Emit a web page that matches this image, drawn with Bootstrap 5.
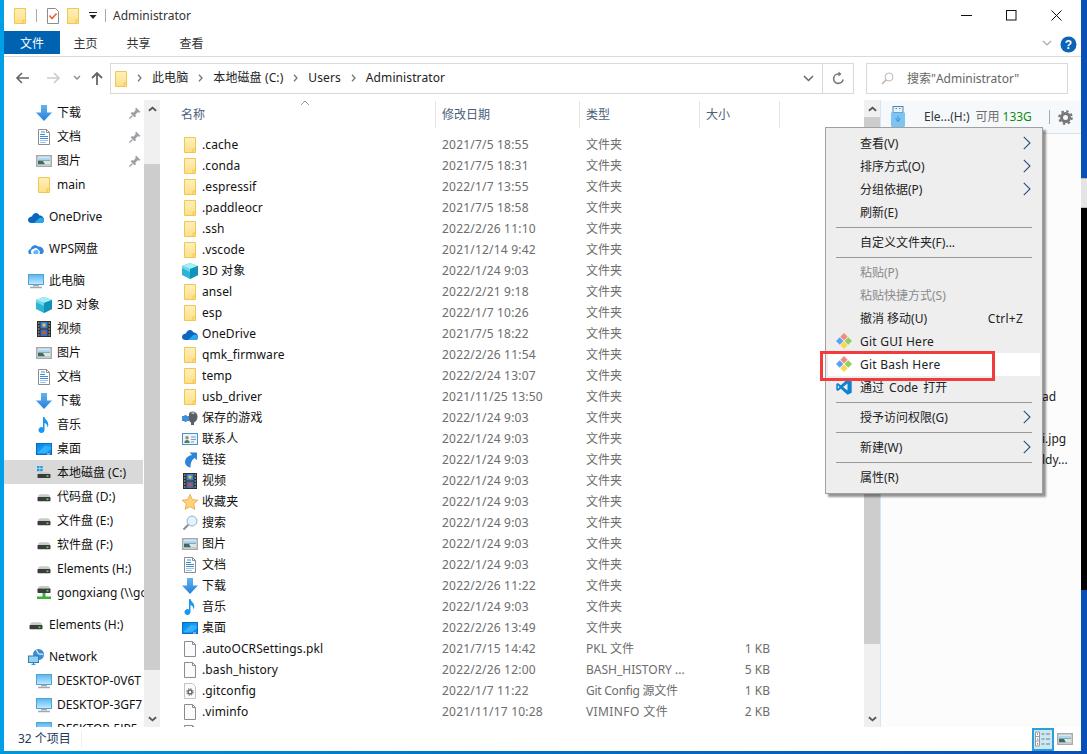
<!DOCTYPE html>
<html lang="zh-CN">
<head>
<meta charset="utf-8">
<title>Administrator</title>
<link href="https://cdn.jsdelivr.net/npm/bootstrap@5.3.0/dist/css/bootstrap.min.css" rel="stylesheet">
<style>
html,body{margin:0;background:#fff}
.screen{width:1087px;height:754px;overflow:hidden;font:12px/16px "Noto Sans","Noto Sans CJK SC",sans-serif;color:#111}
.edge-l{width:4px;background:#00a0e6}
.edge-b{height:3px;background:linear-gradient(90deg,#0098da,#0072c6 45%,#0a4fb4)}
.edge-r{width:6px}
.er1{height:178px;background:#0a4fb4}.er2{height:30px;background:#e4e4e4;border-top:1px solid #bbb;border-bottom:1px solid #bbb}.er3{height:382px;background:#000}.er4{flex:1;background:#0a4fb4}
.win{width:1077px;background:#fff}
.titlebar{height:31px}
.tico{width:16px;height:16px;flex:none}
.qa1{margin-left:8px}
.qsep{width:1px;height:13px;background:#a8a8a8}
.wtitle{font-size:12px;color:#333;margin-left:7px}
.wbox{margin-right:2px}
.wbtn{width:45px;height:31px}
.tabs{height:26px;border-bottom:1px solid #dadada}
.tab{width:53px;height:23px;line-height:25px;text-align:center;color:#333}
.tab-file{width:56px;margin-right:-1px;background:#0063b1;color:#fff}
.hchev{margin-top:9px}
.hcirc{margin-top:5px}
.addr{height:43px;padding-top:6px}
.navbtn{width:18px;height:16px;flex:none;margin-top:7px}
.nb1{margin-left:9px}.nb2{margin-left:14px}.nb3{margin-left:10px;margin-top:12px;flex:none}.nb4{margin-left:7px}
.addrbox{width:744px;height:31px;margin-left:4px;border:1px solid #d9d9d9}
.adfold{margin-left:2px}
.crumb{color:#222;margin-top:-2px}
.cr{margin:0 10px;letter-spacing:.1px}
.addrbtn{width:31px;height:29px;border-left:1px solid #d9d9d9}
.srch{width:202px;height:31px;margin-left:12px;border:1px solid #d9d9d9;color:#666}
.srchic{margin-left:14px}
.srtx{margin-left:13px}
.mainarea{height:627px}
.side{width:140px}
.sbar{width:16px;background:#f0f0f0;flex:none}
.sthumb{background:#cdcdcd}
.sarrow{height:17px}
.st1{height:47px}.st2{height:506px}.st3{height:527px}
.nrow{height:24px;padding-top:2px;white-space:nowrap;overflow:hidden;color:#111}
.l1{padding-left:24px}.l2{padding-left:32px}
.nrow .nico{width:16px;height:16px;flex:none;margin-right:5px}
.sel{background:#d9d9d9;margin-right:1px}
.ngap{margin-top:8px}
.pin{width:12px;height:12px;flex:none;margin-left:auto;margin-right:3px}
.flist{width:704px;flex:none}
.fhead{height:29px;color:#4c607a;position:relative}
.hc{height:27px;margin-top:1px;border-right:1px solid #e5e5e5;padding-left:6px;line-height:27px}
.hc1{width:276px;padding-left:21px}.hc2{width:144px}.hc3{width:120px}.hc4{width:80px}
.sortcaret{position:absolute;left:140px;top:0;width:10px;height:6px}
.frows{margin-top:5px}
.frow{height:21px;line-height:21px;color:#6d6d6d;white-space:nowrap}
.fn{width:276px;padding-left:22px;color:#111;letter-spacing:.1px}
.fn svg{width:16px;height:16px;flex:none;margin-right:4px}
.fd{width:144px;padding-left:6px;letter-spacing:.2px}
.ft{width:120px;padding-left:6px;overflow:hidden}
.ft-narrow{letter-spacing:-.25px}
.ft-wide{letter-spacing:.4px}
.fs{width:70px;text-align:right}
.prev{border-left:1px solid #d6e5f5;background:#fcfcfc}
.phead{height:33px;margin-top:1px;background:#f6f9fc;border-bottom:1px solid #dfdfdf}
.usbi{margin-left:9px}
.pname{color:#333}.pfree{color:#6d6d6d}.pgb{color:#128a12}
.pn1{margin-left:18px}.pf1{margin-left:6px}.pg1{margin-left:3px}
.psep{width:1px;height:14px;background:#aaa;margin-left:17px}
.pgear{margin-left:8px}
.pspace{height:252px}
.ptsp{height:21px}
.ptxt{padding-left:161px;color:#222;white-space:nowrap;height:21px;line-height:21px}
.status{height:24px;color:#1e395b}
.stt{margin-left:14px;margin-right:10px}
.stsep{width:1px;height:16px;background:#efefef}
.vbtn{width:22px;height:23px;background:#cce8f6;border:2px solid #2ba0d8}
.vic{margin:0 8px 0 3px}
.ctx{position:absolute;left:821px;top:127px;width:218px;padding:4px 2px;background:#eee;border:1px solid #a0a0a0;box-shadow:3px 3px 2px rgba(0,0,0,.42);color:#222}
.mi{height:23px;line-height:23px;padding-left:32px;position:relative;white-space:nowrap}
.mi.off{color:#8a8a8a}
.lat{letter-spacing:.25px}
.wsp{word-spacing:2px}
.mi .mic{position:absolute;left:8px;top:3px;width:16px;height:16px}
.mi .arr{position:absolute;right:9px;top:4px;width:8px;height:14px}
.mi .sc{position:absolute;right:17px;top:0;letter-spacing:.25px}
.mi.hov{background:#fff}
.msep{height:1px;background:#999;margin:3px 8px}
.redbox{position:absolute;left:-6px;top:223px;width:175px;height:30px;border:3px solid #f33b3b}
.defs{width:0;height:0}
</style>
</head>
<body>
<svg class="defs d-block" xmlns="http://www.w3.org/2000/svg">
<defs>
<linearGradient id="gf" x1="0" y1="0" x2="0" y2="1"><stop offset="0" stop-color="#feefbd"/><stop offset="1" stop-color="#fddf85"/></linearGradient>
<linearGradient id="gb" x1="0" y1="0" x2="0" y2="1"><stop offset="0" stop-color="#62b4f2"/><stop offset="1" stop-color="#2580d6"/></linearGradient>
<linearGradient id="gs" x1="0" y1="0" x2="0" y2="1"><stop offset="0" stop-color="#56b6f0"/><stop offset="1" stop-color="#c4eaff"/></linearGradient>
<linearGradient id="gd" x1="0" y1="0" x2="1" y2="1"><stop offset="0" stop-color="#0a7fe0"/><stop offset=".5" stop-color="#12a0f8"/><stop offset="1" stop-color="#0a86e6"/></linearGradient>
</defs>
<symbol id="fo" viewBox="0 0 16 16"><path d="M2.500.5h11v15h-11z" fill="url(#gf)" stroke="#f0c850"/><path d="M11 15v-3h2.500" fill="none" stroke="#f0c850"/></symbol>
<symbol id="cu" viewBox="0 0 16 16"><path d="M8 0 16 3v9l-8 4-8-4V3z" fill="#2fb4d6"/><path d="M8 0 16 3 8 6 0 3z" fill="#a4eef4"/><path d="M8 6 16 3v9l-8 4z" fill="#0f93bb"/><path d="M0 3 8 6v3L0 5z" fill="#6fd9e8"/></symbol>
<symbol id="od" viewBox="0 0 16 16"><g transform="translate(0,-1) scale(1,1.200)"><path d="M4 7c1-3.500 6-4 7.500-.8C14 6 16 8 16 10c0 1.500-1 2.500-2.500 2.500h-10C1.500 12.500 0 11.500 0 10 0 8 2 7 4 7z" fill="#0a66c0"/><path d="M6 12.500 11 8.500c2-1.300 5-.5 5 1.700 0 1.400-1 2.300-2.500 2.300z" fill="#2aa6ec"/></g></symbol>
<symbol id="wp" viewBox="0 0 16 16"><path d="M1 13c-1.500-2-.5-4.500 1.500-5C3.500 4 8 3 10 5.500 12 5 15 6.500 15.500 9c.7 2-.3 4-2 4h-2c1-2 0-4-1.500-4.500C9 6.800 7 6.500 5.500 8 4 8 3 9 3 11c0 1 .5 2 1 2z" fill="#2f86e8"/><path d="M6 13c-1.500-1.500-.5-3.500 1-3.500 1.500-1.500 3.500-.5 3.500 1.500 0 1-.3 1.500-.7 2z" fill="#67b4f5"/></symbol>
<symbol id="pc" viewBox="0 0 16 16"><rect x=".5" y="1.500" width="15" height="10" fill="url(#gs)" stroke="#4aa6da"/><path d="M5 12.500h6M2 14.500h12" stroke="#a0a8b0" stroke-width="1.400"/></symbol>
<symbol id="dl" viewBox="0 0 16 16"><path d="M5 0h6v7.500h5L8 16 0 7.500h5z" fill="url(#gb)"/></symbol>
<symbol id="dc" viewBox="0 0 16 16"><path d="M2.500.5h8l3 3v12h-11z" fill="#fff" stroke="#8c8c8c"/><path d="M10.500.5v3h3" fill="none" stroke="#8c8c8c"/><path d="M5 3h4M4 5.500h5M4 7.500h8M4 9.500h8" stroke="#3a8ed8"/><path d="M4 11.500h8M4 13.500h6" stroke="#9cc4e8"/></symbol>
<symbol id="pi" viewBox="0 0 16 16"><rect x=".8" y="2.800" width="14.400" height="10.400" fill="#fff" stroke="#a5a5a5" stroke-width="1.500"/><rect x="2" y="4.500" width="12" height="3" fill="#a6d8f4"/><path d="M2 7.500h12v4H2z" fill="#3f6b62"/><path d="M7 8h7v3.500H9z" fill="#d9e6e4"/></symbol>
<symbol id="vi" viewBox="0 0 16 16"><rect x="1" y="0" width="14" height="16" fill="#2e2e2e"/><path d="M2 1.500h1.500v1H2zM2 4.500h1.500v1H2zM2 7.500h1.500v1H2zM2 10.500h1.500v1H2zM2 13.500h1.500v1H2zM12.500 1.500H14v1h-1.500zM12.500 4.500H14v1h-1.500zM12.500 7.500H14v1h-1.500zM12.500 10.500H14v1h-1.500zM12.500 13.500H14v1h-1.500z" fill="#c8c8c8"/><rect x="4.500" y="1" width="7" height="6.500" fill="#3d7fd0"/><rect x="4.500" y="8.500" width="7" height="6.500" fill="#3d6fb8"/><circle cx="8" cy="4" r="1.700" fill="#e8c840"/><circle cx="8" cy="11.500" r="1.800" fill="#d0552c"/></symbol>
<symbol id="mu" viewBox="0 0 16 16"><path d="M7 0h1.500c.4 2.500 3.800 3.800 3.800 7.500 0 1.200-.3 2.200-.9 3 .2-2.500-1.300-4-2.900-4.500v7a3 3 0 1 1-1.500-2.600z" fill="#1c97ee"/></symbol>
<symbol id="de" viewBox="0 0 16 16"><rect x="0" y="2" width="16" height="12" fill="#0a6cc4"/><rect x="1" y="3" width="14" height="9.500" fill="url(#gd)"/><path d="M1 12.500 9 5l6 1v2l-5 4.500z" fill="#4cc0ff" opacity=".6"/><path d="M11 13h3" stroke="#cfe9fb"/></symbol>
<symbol id="dr" viewBox="0 0 16 16"><path d="M2 8c0-1.500 1-2.800 2.500-2.800h7C13 5.200 14 6.500 14 8z" fill="#c9c9c9"/><rect x="1.500" y="8" width="13" height="4.200" rx=".8" fill="#3b3b3b"/><rect x="10.500" y="9.500" width="2" height="1.500" fill="#52e052"/></symbol>
<symbol id="cd" viewBox="0 0 16 16"><path d="M1 1h2.500v2.300H1zM4.200 1h2.500v2.300H4.200zM1 4h2.500v2.300H1zM4.200 4h2.500v2.300H4.200z" fill="#17a2e6"/><path d="M2 9c0-1 1-1.800 2.500-1.800h7C13 7.200 14 8 14 9z" fill="#c9c9c9"/><rect x="1.500" y="9" width="13" height="4" rx=".8" fill="#3b3b3b"/><rect x="10.500" y="10.300" width="2" height="1.500" fill="#52e052"/></symbol>
<symbol id="nd" viewBox="0 0 16 16"><path d="M2 3.500C2 2.200 3 1 4.500 1h7C13 1 14 2.200 14 3.500z" fill="#c9c9c9"/><rect x="1.500" y="3.500" width="13" height="4.500" rx=".8" fill="#3b3b3b"/><rect x="10.500" y="5" width="2" height="1.500" fill="#52e052"/><path d="M6.500 8h3v3.500h5.500V14H1v-2.500h5.500z" fill="#3fae3f"/></symbol>
<symbol id="ne" viewBox="0 0 16 16"><circle cx="10.500" cy="5.500" r="5.500" fill="#3d8cd0"/><path d="M8 1c2 1 1 3 3 4s3-1 4 1" fill="none" stroke="#d5e9f8" stroke-width="1.300"/><rect x=".5" y="7" width="10" height="6.500" fill="#8fd2f6" stroke="#2f7fb8"/><path d="M3.500 15.300h4M5.500 13.500v2" stroke="#2f7fb8"/></symbol>
<symbol id="gm" viewBox="0 0 16 16"><path d="M7 3.500C9 0 15 1 15.500 6c.3 3-1.200 5.500-3.500 6.500V15H9v-2.500C7.500 12 6.500 10 7 8z" fill="#5a5f66"/><path d="M9 3c1.500-1 3-1 4 0-1 1-3 1.500-4 0z" fill="#c2c6cb"/><path d="M0 6h2.500V5h2v1H7v5H4.500v1h-2v-1H0z" fill="#3e8ed8"/></symbol>
<symbol id="co" viewBox="0 0 16 16"><rect x=".5" y="2.500" width="15" height="11" fill="#eaf4fb" stroke="#4a92c8"/><circle cx="5" cy="6.800" r="1.800" fill="#b08a68"/><path d="M2.300 12c0-2 1-3 2.700-3s2.700 1 2.700 3z" fill="#4f7f63"/><path d="M9 6h5M9 8.500h5M9 11h3" stroke="#7a9cb8"/></symbol>
<symbol id="li" viewBox="0 0 16 16"><path d="M15 .5V8l-2.400-2C9.500 8 8.300 11.500 8.500 15.500 4.300 15 2 11.500 3.500 7.500 4.700 5 7 3.500 10 3L7.500.5z" fill="#2b86d8"/></symbol>
<symbol id="st" viewBox="0 0 16 16"><path d="M8 .5 10.300 5.600l5.500.6-4.100 3.700 1.200 5.500L8 12.600l-4.900 2.800 1.200-5.500L.2 6.200l5.500-.6z" fill="#fcd27a" stroke="#e8a43a" stroke-width=".8"/></symbol>
<symbol id="se" viewBox="0 0 16 16"><circle cx="10" cy="6" r="5" fill="#e4f2fc" stroke="#94b4cc"/><path d="M6.300 9.700 1.500 14.500" stroke="#8a8f96" stroke-width="2"/></symbol>
<symbol id="fi" viewBox="0 0 16 16"><path d="M2.500.5h8l3 3v12h-11z" fill="#fbfbfb" stroke="#8c8c8c"/><path d="M10.500.5v3h3" fill="none" stroke="#8c8c8c"/></symbol>
<symbol id="gc" viewBox="0 0 16 16"><path d="M2.500.5h8l3 3v12h-11z" fill="#fbfbfb" stroke="#c4c4c4"/><circle cx="8" cy="9" r="2" fill="none" stroke="#666" stroke-width="1.500"/><circle cx="8" cy="9" r="3.300" fill="none" stroke="#666" stroke-width="1" stroke-dasharray="1.300 1.300"/></symbol>
<symbol id="gi" viewBox="0 0 16 16"><path d="M8 0 11.700 3.700 8 7.400 4.300 3.700z" fill="#f08c80"/><path d="M12.300 4.300 16 8 12.300 11.700 8.600 8z" fill="#8ed25c"/><path d="M8 8.600 11.700 12.300 8 16 4.300 12.300z" fill="#f8d94c"/><path d="M3.700 4.300 7.400 8 3.700 11.700 0 8z" fill="#5aa2f2"/></symbol>
<symbol id="vs" viewBox="0 0 16 16"><path d="M11.500.3 15.700 2.300V13.700L11.500 15.700 4.800 9.700 1.800 12 .3 11V5L1.800 4 4.800 6.300z" fill="#0f82d2"/><path d="M11.500 4.600 7 8l4.500 3.400z" fill="#eee"/><path d="M1.800 6.300V9.700L3.600 8z" fill="#eee"/></symbol>
<symbol id="pn" viewBox="0 0 12 12"><path d="M7 .5 11.500 5 10 5.700 8.700 5.300 6.500 7.500 6.800 9.500 5.500 10.300 1.700 6.500 2.500 5.200 4.500 5.500 6.700 3.300 6.300 2z" fill="#9aa0a6"/><path d="M3.300 8.700.5 11.500" stroke="#9aa0a6" stroke-width="1.300"/></symbol>
<symbol id="ua" viewBox="0 0 10 6"><path d="M1 5 5 1.500 9 5" fill="none" stroke="#555" stroke-width="2"/></symbol>
<symbol id="da" viewBox="0 0 10 6"><path d="M1 1 5 4.500 9 1" fill="none" stroke="#555" stroke-width="2"/></symbol>
<symbol id="ma" viewBox="0 0 8 14"><path d="M.8.8 7 7 .8 13.200" fill="none" stroke="#2c4f80" stroke-width="1.100"/></symbol>
<symbol id="cr" viewBox="0 0 5 8"><path d="M1 .8 4 4 1 7.200" fill="none" stroke="#777" stroke-width="1.300"/></symbol>
</svg>

<div class="screen d-flex flex-column">
<div class="d-flex flex-grow-1 overflow-hidden">
<div class="edge-l"></div>
<div class="win d-flex flex-column position-relative">

<div class="titlebar d-flex align-items-center">
<svg class="tico qa1"><use href="#fo"/></svg>
<div class="qsep ms-2"></div>
<svg class="tico ms-2" viewBox="0 0 16 16"><path d="M2.500.5h8l3 3v12h-11z" fill="#fff" stroke="#8c8c8c"/><path d="M4.500 7.500 7 10.500 11.500 5.500" fill="none" stroke="#e8622c" stroke-width="1.500"/></svg>
<svg class="tico ms-1"><use href="#fo"/></svg>
<svg class="ms-2" width="8" height="8" viewBox="0 0 8 8"><path d="M0 .5h8" stroke="#222"/><path d="M.5 3h7L4 7z" fill="#222"/></svg>
<div class="qsep ms-2"></div>
<div class="wtitle">Administrator</div>
<div class="ms-auto d-flex wbox">
<div class="wbtn d-flex align-items-center justify-content-center"><svg width="11" height="11"><path d="M0 5.500h11" stroke="#111"/></svg></div>
<div class="wbtn d-flex align-items-center justify-content-center"><svg width="11" height="11"><rect x=".5" y=".5" width="9.500" height="9.500" fill="none" stroke="#111"/></svg></div>
<div class="wbtn d-flex align-items-center justify-content-center"><svg width="11" height="11"><path d="M.5.500l10 10M10.500.500l-10 10" stroke="#111"/></svg></div>
</div>
</div>

<div class="tabs d-flex">
<div class="tab tab-file">文件</div><div class="tab">主页</div><div class="tab">共享</div><div class="tab">查看</div>
<div class="ms-auto d-flex align-items-start">
<svg class="hchev" width="10" height="7" viewBox="0 0 10 7"><path d="M1 1 5 5 9 1" fill="none" stroke="#aaa" stroke-width="1.200"/></svg>
<svg class="hcirc ms-2 me-1" width="17" height="17" viewBox="0 0 17 17"><circle cx="8.500" cy="8.500" r="8" fill="#0a64b8"/><text x="8.500" y="13" text-anchor="middle" font-size="12" font-weight="700" fill="#fff" font-family="Liberation Sans">?</text></svg>
</div>
</div>

<div class="addr d-flex align-items-start">
<svg class="navbtn nb1" viewBox="0 0 18 16"><path d="M16 8H4M9 3 4 8l5 5" fill="none" stroke="#666" stroke-width="1.600"/></svg>
<svg class="navbtn nb2" viewBox="0 0 18 16"><path d="M2 8h12M9 3l5 5-5 5" fill="none" stroke="#ccc" stroke-width="1.600"/></svg>
<svg class="nb3" width="8" height="6" viewBox="0 0 8 6"><path d="M1 1l3 3 3-3" fill="none" stroke="#888" stroke-width="1.400"/></svg>
<svg class="navbtn nb4" viewBox="0 0 18 16"><path d="M9 15V3M4 8l5-5 5 5" fill="none" stroke="#666" stroke-width="1.800"/></svg>
<div class="addrbox d-flex align-items-center">
<svg class="tico adfold"><use href="#fo"/></svg>
<div class="d-flex align-items-center crumb ms-2">
<svg width="5" height="8"><use href="#cr"/></svg><span class="cr">此电脑</span>
<svg width="5" height="8"><use href="#cr"/></svg><span class="cr">本地磁盘 (C:)</span>
<svg width="5" height="8"><use href="#cr"/></svg><span class="cr">Users</span>
<svg width="5" height="8"><use href="#cr"/></svg><span class="cr">Administrator</span>
</div>
<svg class="ms-auto me-2" width="11" height="7" viewBox="0 0 11 7"><path d="M1 1l4.500 4.500L10 1" fill="none" stroke="#666" stroke-width="1.500"/></svg>
<div class="addrbtn d-flex align-items-center justify-content-center"><svg width="15" height="15" viewBox="0 0 15 15"><path d="M12 8.500A4.700 4.700 0 1 1 7 3h2" fill="none" stroke="#777" stroke-width="1.600"/><path d="M7.500 .5l3 2.500-3 2.500z" fill="#777"/></svg></div>
</div>
<div class="srch d-flex align-items-center">
<svg class="srchic" width="13" height="13" viewBox="0 0 13 13"><circle cx="8" cy="5" r="4" fill="none" stroke="#bbb"/><path d="M5 8 1 12" stroke="#c8a890" stroke-width="1.200"/></svg>
<span class="srtx">搜索"Administrator"</span>
</div>
</div>

<div class="mainarea d-flex overflow-hidden">
<div class="side overflow-hidden flex-shrink-0">
<div class="nrow l2 d-flex align-items-center"><svg class="nico"><use href="#dl"/></svg>下载<svg class="pin"><use href="#pn"/></svg></div>
<div class="nrow l2 d-flex align-items-center"><svg class="nico"><use href="#dc"/></svg>文档<svg class="pin"><use href="#pn"/></svg></div>
<div class="nrow l2 d-flex align-items-center"><svg class="nico"><use href="#pi"/></svg>图片<svg class="pin"><use href="#pn"/></svg></div>
<div class="nrow l2 d-flex align-items-center"><svg class="nico"><use href="#fo"/></svg>main</div>
<div class="nrow l1 ngap d-flex align-items-center"><svg class="nico"><use href="#od"/></svg>OneDrive</div>
<div class="nrow l1 ngap d-flex align-items-center"><svg class="nico"><use href="#wp"/></svg>WPS网盘</div>
<div class="nrow l1 ngap d-flex align-items-center"><svg class="nico"><use href="#pc"/></svg>此电脑</div>
<div class="nrow l2 d-flex align-items-center"><svg class="nico"><use href="#cu"/></svg>3D 对象</div>
<div class="nrow l2 d-flex align-items-center"><svg class="nico"><use href="#vi"/></svg>视频</div>
<div class="nrow l2 d-flex align-items-center"><svg class="nico"><use href="#pi"/></svg>图片</div>
<div class="nrow l2 d-flex align-items-center"><svg class="nico"><use href="#dc"/></svg>文档</div>
<div class="nrow l2 d-flex align-items-center"><svg class="nico"><use href="#dl"/></svg>下载</div>
<div class="nrow l2 d-flex align-items-center"><svg class="nico"><use href="#mu"/></svg>音乐</div>
<div class="nrow l2 d-flex align-items-center"><svg class="nico"><use href="#de"/></svg>桌面</div>
<div class="nrow l2 sel d-flex align-items-center"><svg class="nico"><use href="#cd"/></svg>本地磁盘 (C:)</div>
<div class="nrow l2 d-flex align-items-center"><svg class="nico"><use href="#dr"/></svg>代码盘 (D:)</div>
<div class="nrow l2 d-flex align-items-center"><svg class="nico"><use href="#dr"/></svg>文件盘 (E:)</div>
<div class="nrow l2 d-flex align-items-center"><svg class="nico"><use href="#dr"/></svg>软件盘 (F:)</div>
<div class="nrow l2 d-flex align-items-center"><svg class="nico"><use href="#dr"/></svg>Elements (H:)</div>
<div class="nrow l2 d-flex align-items-center"><svg class="nico"><use href="#nd"/></svg>gongxiang (\\gongxiang)</div>
<div class="nrow l1 ngap d-flex align-items-center"><svg class="nico"><use href="#dr"/></svg>Elements (H:)</div>
<div class="nrow l1 ngap d-flex align-items-center"><svg class="nico"><use href="#ne"/></svg>Network</div>
<div class="nrow l2 d-flex align-items-center"><svg class="nico"><use href="#pc"/></svg>DESKTOP-0V6T</div>
<div class="nrow l2 d-flex align-items-center"><svg class="nico"><use href="#pc"/></svg>DESKTOP-3GF7</div>
<div class="nrow l2 d-flex align-items-center"><svg class="nico"><use href="#pc"/></svg>DESKTOP-5JP5</div>
</div>
<div class="sbar d-flex flex-column">
<div class="sarrow d-flex align-items-center justify-content-center"><svg width="9" height="6"><use href="#ua"/></svg></div>
<div class="st1"></div>
<div class="sthumb st2"></div>
<div class="flex-grow-1"></div>
<div class="sarrow d-flex align-items-center justify-content-center"><svg width="9" height="6"><use href="#da"/></svg></div>
</div>

<div class="flist overflow-hidden">
<div class="fhead d-flex">
<div class="hc hc1">名称</div><div class="hc hc2">修改日期</div><div class="hc hc3">类型</div><div class="hc hc4">大小</div>
<svg class="sortcaret" viewBox="0 0 10 6"><path d="M1 5 5 1l4 4" fill="none" stroke="#999"/></svg>
</div>
<div class="frows">
<div class="frow d-flex"><div class="fn d-flex align-items-center"><svg><use href="#fo"/></svg>.cache</div><div class="fd">2021/7/5 18:55</div><div class="ft">文件夹</div></div>
<div class="frow d-flex"><div class="fn d-flex align-items-center"><svg><use href="#fo"/></svg>.conda</div><div class="fd">2021/7/5 18:31</div><div class="ft">文件夹</div></div>
<div class="frow d-flex"><div class="fn d-flex align-items-center"><svg><use href="#fo"/></svg>.espressif</div><div class="fd">2022/1/7 13:55</div><div class="ft">文件夹</div></div>
<div class="frow d-flex"><div class="fn d-flex align-items-center"><svg><use href="#fo"/></svg>.paddleocr</div><div class="fd">2021/7/5 18:58</div><div class="ft">文件夹</div></div>
<div class="frow d-flex"><div class="fn d-flex align-items-center"><svg><use href="#fo"/></svg>.ssh</div><div class="fd">2022/2/26 11:10</div><div class="ft">文件夹</div></div>
<div class="frow d-flex"><div class="fn d-flex align-items-center"><svg><use href="#fo"/></svg>.vscode</div><div class="fd">2021/12/14 9:42</div><div class="ft">文件夹</div></div>
<div class="frow d-flex"><div class="fn d-flex align-items-center"><svg><use href="#cu"/></svg>3D 对象</div><div class="fd">2022/1/24 9:03</div><div class="ft">文件夹</div></div>
<div class="frow d-flex"><div class="fn d-flex align-items-center"><svg><use href="#fo"/></svg>ansel</div><div class="fd">2022/2/21 9:18</div><div class="ft">文件夹</div></div>
<div class="frow d-flex"><div class="fn d-flex align-items-center"><svg><use href="#fo"/></svg>esp</div><div class="fd">2022/1/7 10:26</div><div class="ft">文件夹</div></div>
<div class="frow d-flex"><div class="fn d-flex align-items-center"><svg><use href="#od"/></svg>OneDrive</div><div class="fd">2021/7/5 18:22</div><div class="ft">文件夹</div></div>
<div class="frow d-flex"><div class="fn d-flex align-items-center"><svg><use href="#fo"/></svg>qmk_firmware</div><div class="fd">2022/2/26 11:54</div><div class="ft">文件夹</div></div>
<div class="frow d-flex"><div class="fn d-flex align-items-center"><svg><use href="#fo"/></svg>temp</div><div class="fd">2022/2/24 13:07</div><div class="ft">文件夹</div></div>
<div class="frow d-flex"><div class="fn d-flex align-items-center"><svg><use href="#fo"/></svg>usb_driver</div><div class="fd">2021/11/25 13:50</div><div class="ft">文件夹</div></div>
<div class="frow d-flex"><div class="fn d-flex align-items-center"><svg><use href="#gm"/></svg>保存的游戏</div><div class="fd">2022/1/24 9:03</div><div class="ft">文件夹</div></div>
<div class="frow d-flex"><div class="fn d-flex align-items-center"><svg><use href="#co"/></svg>联系人</div><div class="fd">2022/1/24 9:03</div><div class="ft">文件夹</div></div>
<div class="frow d-flex"><div class="fn d-flex align-items-center"><svg><use href="#li"/></svg>链接</div><div class="fd">2022/1/24 9:03</div><div class="ft">文件夹</div></div>
<div class="frow d-flex"><div class="fn d-flex align-items-center"><svg><use href="#vi"/></svg>视频</div><div class="fd">2022/1/24 9:03</div><div class="ft">文件夹</div></div>
<div class="frow d-flex"><div class="fn d-flex align-items-center"><svg><use href="#st"/></svg>收藏夹</div><div class="fd">2022/1/24 9:03</div><div class="ft">文件夹</div></div>
<div class="frow d-flex"><div class="fn d-flex align-items-center"><svg><use href="#se"/></svg>搜索</div><div class="fd">2022/1/24 9:03</div><div class="ft">文件夹</div></div>
<div class="frow d-flex"><div class="fn d-flex align-items-center"><svg><use href="#pi"/></svg>图片</div><div class="fd">2022/1/24 9:03</div><div class="ft">文件夹</div></div>
<div class="frow d-flex"><div class="fn d-flex align-items-center"><svg><use href="#dc"/></svg>文档</div><div class="fd">2022/1/24 9:03</div><div class="ft">文件夹</div></div>
<div class="frow d-flex"><div class="fn d-flex align-items-center"><svg><use href="#dl"/></svg>下载</div><div class="fd">2022/2/26 11:22</div><div class="ft">文件夹</div></div>
<div class="frow d-flex"><div class="fn d-flex align-items-center"><svg><use href="#mu"/></svg>音乐</div><div class="fd">2022/1/24 9:03</div><div class="ft">文件夹</div></div>
<div class="frow d-flex"><div class="fn d-flex align-items-center"><svg><use href="#de"/></svg>桌面</div><div class="fd">2022/2/26 13:49</div><div class="ft">文件夹</div></div>
<div class="frow d-flex"><div class="fn d-flex align-items-center"><svg><use href="#fi"/></svg>.autoOCRSettings.pkl</div><div class="fd">2021/7/15 14:42</div><div class="ft">PKL 文件</div><div class="fs">1 KB</div></div>
<div class="frow d-flex"><div class="fn d-flex align-items-center"><svg><use href="#fi"/></svg>.bash_history</div><div class="fd">2022/2/26 12:00</div><div class="ft">BASH_HISTORY ...</div><div class="fs">5 KB</div></div>
<div class="frow d-flex"><div class="fn d-flex align-items-center"><svg><use href="#gc"/></svg>.gitconfig</div><div class="fd">2022/1/7 11:22</div><div class="ft ft-narrow">Git Config 源文件</div><div class="fs">1 KB</div></div>
<div class="frow d-flex"><div class="fn d-flex align-items-center"><svg><use href="#fi"/></svg>.viminfo</div><div class="fd">2021/11/17 10:28</div><div class="ft ft-wide">VIMINFO 文件</div><div class="fs">2 KB</div></div>
<div class="frow d-flex"><div class="fn d-flex align-items-center"><svg><use href="#fi"/></svg></div></div>
</div>
</div>

<div class="sbar d-flex flex-column">
<div class="sarrow d-flex align-items-center justify-content-center"><svg width="9" height="6"><use href="#ua"/></svg></div>
<div class="sthumb st3"></div>
<div class="flex-grow-1"></div>
<div class="sarrow d-flex align-items-center justify-content-center"><svg width="9" height="6"><use href="#da"/></svg></div>
</div>

<div class="prev flex-grow-1">
<div class="phead d-flex align-items-center">
<svg class="usbi" width="16" height="22" viewBox="0 0 16 22"><rect x="3" y=".5" width="10" height="6" fill="#e8f3fc" stroke="#4a86b8"/><path d="M5.500 2.500h1.500M9 2.500h1.500" stroke="#4a86b8"/><path d="M1 6.500h14V19a2.500 2.500 0 0 1-2.500 2.500h-9A2.500 2.500 0 0 1 1 19z" fill="#7ec4f2"/><path d="M8 10v6M6 12v1.500l2 1.500 2-1.500V12" fill="none" stroke="#3a86c8" stroke-width=".8"/></svg>
<span class="pname pn1">Ele...(H:)</span><span class="pfree pf1">可用</span><span class="pgb pg1">133G</span>
<div class="psep"></div>
<svg class="pgear" width="15" height="15" viewBox="0 0 15 15"><circle cx="7.500" cy="7.500" r="4" fill="none" stroke="#777" stroke-width="3"/><circle cx="7.500" cy="7.500" r="6.300" fill="none" stroke="#777" stroke-width="2" stroke-dasharray="2.470 2.470"/></svg>
</div>
<div class="pspace"></div>
<div class="ptxt">ad</div>
<div class="ptsp"></div>
<div class="ptxt">i.jpg</div>
<div class="ptxt">ldy...</div>
</div>
</div>

<div class="status d-flex align-items-center">
<span class="stt">32 个项目</span><div class="stsep"></div>
<div class="vbtn ms-auto d-flex align-items-center justify-content-center"><svg width="16" height="16" viewBox="0 0 16 16"><path d="M.5 1h4v14h-4zM.5 5.500h4M.5 10h4" fill="#fff" stroke="#999"/><path d="M6.500 3h3M11 3h4M6.500 8h3M11 8h4M6.500 13h3M11 13h4" stroke="#777"/><rect x="2" y="2.500" width="1" height="1" fill="#333"/><rect x="2" y="7.500" width="1.200" height="1.200" fill="#3a86d8"/><rect x="2" y="12.300" width="1.200" height="1.200" fill="#d83a3a"/></svg></div>
<svg class="vic" width="16" height="16"><use href="#pi"/></svg>
</div>

<div class="ctx">
<div class="mi">查看(V)<svg class="arr"><use href="#ma"/></svg></div>
<div class="mi">排序方式(O)<svg class="arr"><use href="#ma"/></svg></div>
<div class="mi">分组依据(P)<svg class="arr"><use href="#ma"/></svg></div>
<div class="mi">刷新(E)</div>
<div class="msep"></div>
<div class="mi">自定义文件夹(F)...</div>
<div class="msep"></div>
<div class="mi off">粘贴(P)</div>
<div class="mi off">粘贴快捷方式(S)</div>
<div class="mi">撤消 移动(U)<span class="sc">Ctrl+Z</span></div>
<div class="mi lat"><svg class="mic"><use href="#gi"/></svg>Git GUI Here</div>
<div class="mi hov lat"><svg class="mic"><use href="#gi"/></svg>Git Bash Here</div>
<div class="mi wsp"><svg class="mic"><use href="#vs"/></svg>通过 Code 打开</div>
<div class="msep"></div>
<div class="mi">授予访问权限(G)<svg class="arr"><use href="#ma"/></svg></div>
<div class="msep"></div>
<div class="mi">新建(W)<svg class="arr"><use href="#ma"/></svg></div>
<div class="msep"></div>
<div class="mi">属性(R)</div>
<div class="redbox"></div>
</div>

</div>
<div class="edge-r d-flex flex-column"><div class="er1"></div><div class="er2"></div><div class="er3"></div><div class="er4"></div></div>
</div>
<div class="edge-b"></div>
</div>
</body>
</html>
